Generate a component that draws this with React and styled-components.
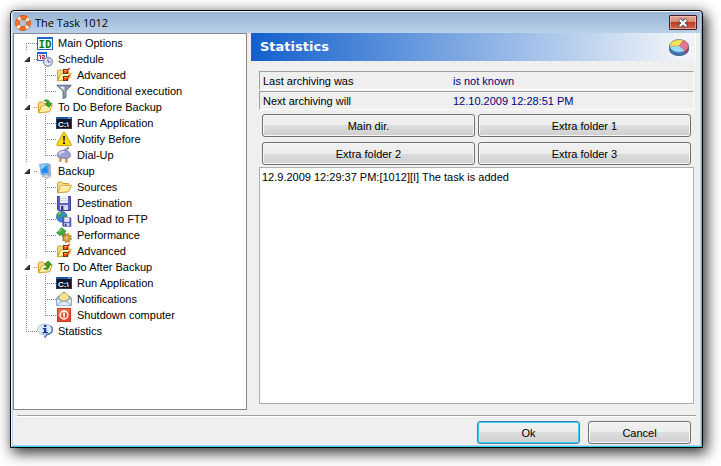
import React, { useState } from 'react'
import styled, { createGlobalStyle, css } from 'styled-components'

const GlobalStyle = createGlobalStyle`
	* {
		box-sizing: border-box;
	}

	body {
		margin: 0;
		background: #fff;
		font: 11px/16px 'Liberation Sans', Arial, sans-serif;
		color: #000;
	}

	button,
	textarea {
		font: inherit;
		color: inherit;
		margin: 0;
	}

	ul {
		list-style: none;
		margin: 0;
		padding: 0;
	}
`

const Page = styled.div`
	display: flex;
	min-height: 100vh;
	padding: 10px 18px 18px 10px;
`

const Window = styled.section`
	flex: 1;
	min-width: 0;
	display: flex;
	flex-direction: column;
	padding: 1px 2px 2px;
	border: 1px solid #000;
	border-radius: 4px 4px 0 0;
	background: #b9d1ea;
	box-shadow: inset 1px 1px 0 #f4f8fc, inset -1px -1px 0 #2fd0ea,
		3px 4px 14px 1px rgba(0, 0, 0, 0.8);
`

const TitleBar = styled.header`
	display: flex;
	align-items: center;
	gap: 4px;
	height: 21px;
	padding: 0 3px 0 2px;
	background: linear-gradient(#98b4d2, #b9d1ea);
`

const WindowTitle = styled.h1`
	flex: 1;
	margin: 0;
	font: 11px/20px 'Open Sans', 'Noto Sans', sans-serif;
`

const CloseButton = styled.button`
	display: flex;
	align-items: center;
	justify-content: center;
	width: 28px;
	height: 15px;
	padding: 0;
	border: 1px solid #4a1820;
	border-radius: 1px;
	background: linear-gradient(#e3a597 0%, #d98a78 48%, #bd3a20 50%, #cf6a50 100%);
	box-shadow: inset 0 0 0 1px rgba(255, 205, 190, 0.55);
`

const Body = styled.div`
	flex: 1;
	display: flex;
	gap: 4px;
	padding: 0 4px 5px 0;
	background: #efefef;
`

const TreePanel = styled.nav`
	flex: none;
	width: 234px;
	padding: 1px 0 0 4px;
	border: 1px solid #828790;
	background: #fff;
`

const TreeRow = styled.div`
	display: flex;
	align-items: center;
	height: 16px;

	& > svg {
		flex: none;
	}
`

const TreeLabel = styled.span`
	padding-left: 5px;
	white-space: nowrap;
`

const vDots = 'repeating-linear-gradient(#808080 0 1px, transparent 1px 2px)'
const hDots = 'repeating-linear-gradient(90deg, #808080 0 1px, transparent 1px 2px)'

const guideStyles = {
	start: css`
		background: ${vDots} 8px 8px / 1px 8px no-repeat,
			${hDots} 8px 8px / 11px 1px no-repeat;
	`,
	line: css`
		background: ${vDots} 8px 0 / 1px 16px no-repeat;
	`,
	tee: css`
		background: ${vDots} 8px 0 / 1px 16px no-repeat,
			${hDots} 8px 8px / 11px 1px no-repeat;
	`,
	end: css`
		background: ${vDots} 8px 0 / 1px 8px no-repeat,
			${hDots} 8px 8px / 11px 1px no-repeat;
	`,
}

const Guide = styled.span`
	flex: none;
	width: 19px;
	height: 16px;
	${({ $kind }) => guideStyles[$kind]}
`

const Expander = styled.button`
	flex: none;
	display: flex;
	align-items: center;
	width: 19px;
	height: 16px;
	padding: 0 0 0 6px;
	border: none;
	background: ${hDots} 16px 8px / 3px 1px no-repeat;
`

const Main = styled.main`
	flex: 1;
	min-width: 0;
	display: flex;
	flex-direction: column;
`

const Banner = styled.div`
	display: flex;
	align-items: center;
	justify-content: space-between;
	height: 28px;
	padding: 0 6px 0 9px;
	border-right: 1px solid #fff;
	background: linear-gradient(90deg, #1260cc, #f0f4f8 97%);
`

const BannerTitle = styled.h2`
	margin: 0;
	font: bold 13px/28px 'DejaVu Sans', Verdana, sans-serif;
	color: #fff;
`

const Content = styled.div`
	flex: 1;
	display: flex;
	flex-direction: column;
	padding: 10px 2px 6px 8px;
`

const Fields = styled.div`
	display: grid;
	gap: 1px;
`

const Field = styled.div`
	display: flex;
	align-items: center;
	height: 19px;
	padding-left: 3px;
	border: 1px solid #a0a0a0;
	border-right-color: #fff;
	border-bottom-color: #fff;
`

const FieldLabel = styled.label`
	width: 190px;
`

const FieldValue = styled.output`
	color: #000080;
`

const FolderButtons = styled.div`
	display: grid;
	grid-template-columns: 1fr 1fr;
	gap: 5px 3px;
	padding: 4px 3px 2px;
`

const Button = styled.button`
	height: 23px;
	padding: 0;
	border: 1px solid ${({ $default }) => ($default ? '#3c7fb1' : '#707070')};
	border-radius: 3px;
	background: linear-gradient(#f2f2f2 0%, #ebebeb 50%, #dddddd 50%, #cfcfcf 100%);
	box-shadow: inset 0 0 0 1px ${({ $default }) => ($default ? '#3bd0f5' : '#f8f8f8')};
`

const Log = styled.textarea`
	flex: 1;
	width: 100%;
	min-height: 120px;
	padding: 1px 2px;
	border: 1px solid #abadb3;
	background: #fff;
	resize: none;
	outline: none;
`

const Footer = styled.footer`
	padding: 0 4px 1px;
	background: #efefef;
`

const FooterRow = styled.div`
	display: flex;
	justify-content: flex-end;
	gap: 8px;
	padding: 5px 5px 0 0;
	border-top: 1px solid #a0a0a0;
	box-shadow: inset 0 1px 0 #fff;

	& button {
		width: 103px;
	}
`

const Svg = ({ children }) => (
	<svg width="16" height="16" viewBox="0 0 16 16" aria-hidden="true">
		{children}
	</svg>
)

const LifeRing = () => (
	<Svg>
		<circle cx="8" cy="8" r="5.6" fill="none" stroke="#c24a10" strokeWidth="4.6" />
		<circle cx="8" cy="8" r="5.6" fill="none" stroke="#f4702a" strokeWidth="3.4" />
		<circle
			cx="8"
			cy="8"
			r="5.6"
			fill="none"
			stroke="#fbeee4"
			strokeWidth="3.8"
			strokeDasharray="2.4 6.4"
			strokeDashoffset="-3.2"
		/>
	</Svg>
)

const IdIcon = () => (
	<Svg>
		<path d="M0 2h16v13H0z" fill="#1a68d0" />
		<path d="M1 4h14v10H1z" fill="#fff" />
		<text
			x="8"
			y="13"
			textAnchor="middle"
			fontFamily="'DejaVu Sans Mono', monospace"
			fontWeight="bold"
			fontSize="11"
			fill="#0f7a14"
		>
			ID
		</text>
	</Svg>
)

const ScheduleIcon = () => (
	<Svg>
		<path d="M0 1h10v9H0z" fill="#1c62dc" />
		<path d="M1 3h8v6H1z" fill="#fff" />
		<path d="M2 4.5h1.5V8M5 4.5h2.5v1.6H5.5v1.5H8" fill="none" stroke="#a81830" />
		<circle cx="11" cy="10.8" r="4.5" fill="#c9cdec" stroke="#7c80b4" />
		<circle cx="11" cy="10.8" r="3.1" fill="#e4e6f8" />
		<path d="M11 8v3h2.6" fill="none" stroke="#4a4f94" />
	</Svg>
)

const FolderShape = () => (
	<>
		<path
			d="M1.5 13.5V4.2l1-1.2h3.2l1.2 1.5h5.6v2"
			fill="#f7dc7c"
			stroke="#cf9f32"
		/>
		<path d="M1.6 13.8 4.5 7l10.9-.8-3 6.6z" fill="#ffee9c" stroke="#cf9f32" />
		<path d="M4.9 8l9-.8" stroke="#fffbd8" />
	</>
)

const FolderIcon = () => (
	<Svg>
		<FolderShape />
	</Svg>
)

const AdvancedIcon = () => (
	<Svg>
		<FolderShape />
		<rect x="7.5" y="2.5" width="4" height="4" fill="#f6cc70" stroke="#4a3a20" />
		<rect x="7.5" y="9.5" width="4" height="4" fill="#f6cc70" stroke="#4a3a20" />
		<path d="M8 4l1.8 1.8L13.6 1M8 11l1.8 1.8L13.6 8" fill="none" stroke="#f03414" strokeWidth="1.5" />
	</Svg>
)

const FunnelIcon = () => (
	<Svg>
		<path d="M.8 2.5h14.4L10 8v6.5l-3 1V8z" fill="#8795a6" stroke="#5b6878" strokeWidth=".8" />
		<path d="M3.5 3.5h5L8 14.2V7.6z" fill="#dfe7ef" />
		<path d="M.8 2.4h14.4" stroke="#62779a" strokeWidth="1.4" />
	</Svg>
)

const FolderBeforeIcon = () => (
	<Svg>
		<FolderShape />
		<path d="M7 1.4c3.2-1.2 5.6-.2 6 3h2L11.8 8.4 8.6 5h2C10.4 3.4 9.2 2.4 7 1.4z" fill="#37a837" stroke="#17701c" strokeWidth=".7" />
	</Svg>
)

const FolderAfterIcon = () => (
	<Svg>
		<FolderShape />
		<path d="M6.6 9.6c2.4.2 3.3-1.2 3.2-4H7.6L11.2 2l3.4 3.6h-2.2c.2 4-2 6-5.8 4z" fill="#37a837" stroke="#17701c" strokeWidth=".7" />
	</Svg>
)

const ConsoleIcon = () => (
	<Svg>
		<path d="M0 2h16v12H0z" fill="#0b1422" />
		<path d="M0 2h16v2H0z" fill="#1c58a4" />
		<path d="M12 3h3" stroke="#8fc0f0" />
		<path d="M.5 4v9.5h15V4" fill="none" stroke="#2c3e5c" />
		<text x="2" y="12" fontFamily="'Liberation Sans', sans-serif" fontWeight="bold" fontSize="8" fill="#fff">
			C:\
		</text>
	</Svg>
)

const WarningIcon = () => (
	<Svg>
		<path d="M8 1.3c.5 0 .8.3 1 .7l6.2 11.2c.4.9 0 1.5-.9 1.5H1.7c-.9 0-1.3-.6-.9-1.5L7 2c.2-.4.5-.7 1-.7z" fill="#fdd905" stroke="#c08d08" strokeWidth=".8" />
		<path d="M7 5h2l-.4 5H7.4z" fill="#222" />
		<path d="M7 11h2v2H7z" fill="#222" />
	</Svg>
)

const PlugIcon = () => (
	<Svg>
		<path d="M9 4c0-2 1-2.6 3-2.6V0" fill="none" stroke="#9a9cae" strokeWidth="2" />
		<path d="M4.2 10v4.6M10.2 10.5v5" stroke="#a87822" strokeWidth="2.6" />
		<path d="M3.8 10v4M9.8 11v4" stroke="#f4d68c" />
		<path d="M1.2 8.6C1.4 5 4.5 3.2 8 3.2c4 0 6.4 2 6.6 5.4 0 1.6-2.2 2.8-5.6 2.8-4.6 0-7.8-1-7.8-2.8z" fill="#9da1d4" stroke="#6e73a8" strokeWidth=".8" />
		<path d="M3.2 7.6c.8-2.2 3-3 5.5-2.8" fill="none" stroke="#e0e2f8" strokeWidth="1.5" />
	</Svg>
)

const ComputerIcon = () => (
	<Svg>
		<path d="M11 .8l2.4 1v10.4L11 13z" fill="#a9bcdc" stroke="#7890bc" strokeWidth=".7" />
		<path d="M5 13l4-1.8 5 1.6-4 2.6z" fill="#d4d9e6" stroke="#8a92aa" strokeWidth=".7" />
		<path d="M2.6 1.2L11 .6l.8 10-7.6 1.2z" fill="#b4d0f4" stroke="#6a90d0" strokeWidth=".7" />
		<path d="M3.4 2l7-.5.6 8.2-6.2 1z" fill="#1f8cf0" />
		<path d="M3.4 2l7-.5L4.2 7z" fill="#86d0fd" />
	</Svg>
)

const DiskShape = () => (
	<>
		<path d="M1.5 1.5h13v14h-12l-1-1z" fill="#5c62c4" stroke="#3c3f94" />
		<path d="M4 1h8v7H4z" fill="#eef2f6" />
		<path d="M4 3.5h8M4 5.5h8" stroke="#d0d8e0" />
		<path d="M4 10h8v5H4z" fill="#d3d6ee" />
		<path d="M5 11h2.4v4H5z" fill="#34378c" />
	</>
)

const DiskIcon = () => (
	<Svg>
		<DiskShape />
	</Svg>
)

const FtpIcon = () => (
	<Svg>
		<circle cx="5.8" cy="5.8" r="5.3" fill="#3a86dc" stroke="#2a5aa4" strokeWidth=".8" />
		<path d="M1.2 3.6C2.4 1.4 5 .6 6.8 1.2L6 3.4 3.8 5 4.2 7 2.4 6.4zM7 5l3-1.6.8 3L8.6 9 6.4 7z" fill="#3da43c" />
		<path d="M2.6 3.4l2-1.6" stroke="#bfe6b4" />
		<g transform="translate(5.8 5.8) scale(.63)">
			<DiskShape />
		</g>
	</Svg>
)

const PerformanceIcon = () => (
	<Svg>
		<path d="M5.4.8l4.6 3.4-1.2 1 1 2.8-3.2 1.4-.8-2.2L4 8.6.6 5.6 2 4.8z" fill="#43ad40" stroke="#207424" strokeWidth=".7" />
		<path d="M3 4.6l2.6-2" stroke="#b4e8a4" />
		<circle cx="10.8" cy="11" r="3.4" fill="#e4b040" stroke="#a87420" />
		<circle cx="10.8" cy="11" r="4.4" fill="none" stroke="#b8822a" strokeWidth="1.4" strokeDasharray="1.8 1.65" />
		<circle cx="10.8" cy="11" r="1.3" fill="#fff" stroke="#a87420" strokeWidth=".6" />
	</Svg>
)

const EnvelopeIcon = () => (
	<Svg>
		<path d="M.8 6.8L8 1l7.2 5.8v7.8H.8z" fill="#b5cff2" stroke="#6684bc" />
		<path d="M3 7.4C3.6 3.4 6 2 8 2s4.6 1.4 5 5.4L8 10.6z" fill="#fbe48c" stroke="#d6ac48" strokeWidth=".7" />
		<path d="M1.2 7.4L8 11.2l6.8-3.8v7H1.2z" fill="#e4effc" />
		<path d="M1 14.4l5-4.3h4l5 4.3M1 7.2l5 3.2M15 7.2l-5 3.2" fill="none" stroke="#7c98cc" strokeWidth=".9" />
	</Svg>
)

const PowerIcon = () => (
	<Svg>
		<rect x="1.5" y="1.5" width="13" height="13" fill="#e2492c" stroke="#c63c22" />
		<path d="M2 2h12v3L2 10z" fill="#f08266" opacity=".6" />
		<circle cx="8" cy="8" r="3.9" fill="none" stroke="#fff" strokeWidth="1.5" />
		<path d="M8 5.6v4.8" stroke="#fff" strokeWidth="1.6" />
	</Svg>
)

const InfoIcon = () => (
	<Svg>
		<path d="M8 1.2c4.2 0 7.4 2 7.4 5.2 0 3-2.6 4.7-5 5.1l-2.8 3.7-.2-3.5C3.4 11.5.6 9.6.6 6.4c0-3.2 3.2-5.2 7.4-5.2z" fill="#dceafb" stroke="#9cb8dc" strokeWidth=".9" />
		<path d="M7.8 14.4l2.4-3c3-.5 5.2-2.4 5.2-5 0-1.4-.8-2.8-2-3.6" fill="none" stroke="#3c6cb4" strokeWidth="1.2" />
		<path d="M7 2h2.4v2H7z" fill="#14349c" />
		<path d="M5.8 5.6h2.6v4M5.6 9.6h5.2" fill="none" stroke="#14349c" strokeWidth="1.2" />
		<path d="M8.2 5v5" stroke="#14349c" strokeWidth="2.2" />
	</Svg>
)

const PieIcon = () => (
	<svg width="20" height="17" viewBox="0 0 20 17" aria-hidden="true">
		<path d="M.5 7v3.5C.8 14 4.5 16.5 10 16.5s9.2-2.5 9.5-6V7z" fill="#3577c8" stroke="#456" strokeWidth=".8" />
		<path d="M15.5 12.6l4-4.4v2.6c-.4 1.7-1.7 3-4 4z" fill="#a83c58" />
		<ellipse cx="10" cy="7" rx="9.4" ry="6.4" fill="#9adcfb" stroke="#678" strokeWidth=".8" />
		<path d="M10.4 6.8L.8 7.4C.8 3.8 4.6.9 10 .8c1.6 0 3 .2 4.4.7z" fill="#f9e25c" stroke="#a89038" strokeWidth=".5" />
		<path d="M10.4 6.8l4.2-5.2c3 1 4.7 3 4.7 5.3 0 2-1.2 3.5-3.2 4.7z" fill="#e67890" stroke="#a44460" strokeWidth=".5" />
	</svg>
)

const CloseGlyph = () => (
	<svg width="12" height="10" viewBox="0 0 12 10" aria-hidden="true">
		<path d="M2.4 1.4l7.2 7.2M9.6 1.4L2.4 8.6" stroke="#4a4452" strokeWidth="3.8" />
		<path d="M2.7 1.7l6.6 6.6M9.3 1.7L2.7 8.3" stroke="#fff" strokeWidth="2.2" />
	</svg>
)

const ExpanderGlyph = ({ open }) => (
	<svg width="7" height="7" viewBox="0 0 7 7" aria-hidden="true">
		<path d={open ? 'M5.5 1v4.5H1z' : 'M1.5.5v6l4-3z'} fill="#404040" stroke="#202020" />
	</svg>
)

const tree = [
	{ label: 'Main Options', icon: IdIcon },
	{
		label: 'Schedule',
		icon: ScheduleIcon,
		items: [
			{ label: 'Advanced', icon: AdvancedIcon },
			{ label: 'Conditional execution', icon: FunnelIcon },
		],
	},
	{
		label: 'To Do Before Backup',
		icon: FolderBeforeIcon,
		items: [
			{ label: 'Run Application', icon: ConsoleIcon },
			{ label: 'Notify Before', icon: WarningIcon },
			{ label: 'Dial-Up', icon: PlugIcon },
		],
	},
	{
		label: 'Backup',
		icon: ComputerIcon,
		items: [
			{ label: 'Sources', icon: FolderIcon },
			{ label: 'Destination', icon: DiskIcon },
			{ label: 'Upload to FTP', icon: FtpIcon },
			{ label: 'Performance', icon: PerformanceIcon },
			{ label: 'Advanced', icon: AdvancedIcon },
		],
	},
	{
		label: 'To Do After Backup',
		icon: FolderAfterIcon,
		items: [
			{ label: 'Run Application', icon: ConsoleIcon },
			{ label: 'Notifications', icon: EnvelopeIcon },
			{ label: 'Shutdown computer', icon: PowerIcon },
		],
	},
	{ label: 'Statistics', icon: InfoIcon },
]

const folders = ['Main dir.', 'Extra folder 1', 'Extra folder 2', 'Extra folder 3']

const TreeBranch = ({ node, first }) => {
	const [open, setOpen] = useState(true)
	const Icon = node.icon

	return (
		<li>
			<TreeRow>
				{node.items ? (
					<Expander
						type="button"
						aria-label={node.label}
						aria-expanded={open}
						onClick={() => setOpen(!open)}
					>
						<ExpanderGlyph open={open} />
					</Expander>
				) : (
					<Guide $kind={first ? 'start' : 'end'} />
				)}
				<Icon />
				<TreeLabel>{node.label}</TreeLabel>
			</TreeRow>
			{node.items && open ? (
				<ul>
					{node.items.map(({ label, icon: ItemIcon }, i) => (
						<li key={label}>
							<TreeRow>
								<Guide $kind="line" />
								<Guide $kind={i === node.items.length - 1 ? 'end' : 'tee'} />
								<ItemIcon />
								<TreeLabel>{label}</TreeLabel>
							</TreeRow>
						</li>
					))}
				</ul>
			) : null}
		</li>
	)
}

export default function App() {
	return (
		<>
			<GlobalStyle />
			<Page>
				<Window>
					<TitleBar>
						<LifeRing />
						<WindowTitle>The Task 1012</WindowTitle>
						<CloseButton type="button" aria-label="Close">
							<CloseGlyph />
						</CloseButton>
					</TitleBar>
					<Body>
						<TreePanel>
							<ul>
								{tree.map((node, i) => (
									<TreeBranch key={node.label} node={node} first={i === 0} />
								))}
							</ul>
						</TreePanel>
						<Main>
							<Banner>
								<BannerTitle>Statistics</BannerTitle>
								<PieIcon />
							</Banner>
							<Content>
								<Fields>
									<Field>
										<FieldLabel htmlFor="last">Last archiving was</FieldLabel>
										<FieldValue id="last">is not known</FieldValue>
									</Field>
									<Field>
										<FieldLabel htmlFor="next">Next archiving will</FieldLabel>
										<FieldValue id="next">12.10.2009 12:28:51 PM</FieldValue>
									</Field>
								</Fields>
								<FolderButtons>
									{folders.map(name => (
										<Button type="button" key={name}>
											{name}
										</Button>
									))}
								</FolderButtons>
								<Log
									readOnly
									aria-label="Task log"
									defaultValue="12.9.2009 12:29:37 PM:[1012][I] The task is added"
								/>
							</Content>
						</Main>
					</Body>
					<Footer>
						<FooterRow>
							<Button type="button" $default>
								Ok
							</Button>
							<Button type="button">Cancel</Button>
						</FooterRow>
					</Footer>
				</Window>
			</Page>
		</>
	)
}
